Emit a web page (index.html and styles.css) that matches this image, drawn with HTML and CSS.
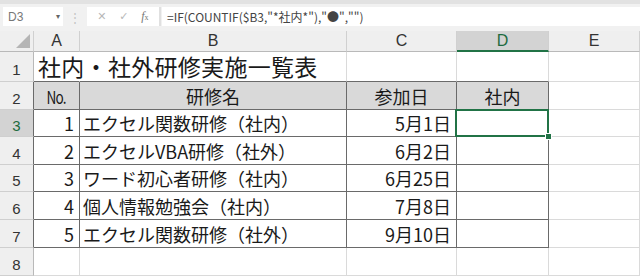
FILE: index.html
```html
<!DOCTYPE html>
<html lang="ja">
<head>
    <meta charset="UTF-8">
    <title>社内・社外研修実施一覧表</title>
    <link rel="stylesheet" href="styles.css">
</head>
<body>
    <div id="formulaBar">
        <div class="namebox">D3<span class="caret">&#9662;</span></div>
        <div class="grip">&#8942;</div>
        <div class="btns">
            <span class="btn">&#10005;</span>
            <span class="btn">&#10003;</span>
            <span class="btn fx"><i>f</i><small>x</small></span>
        </div>
        <div class="formula">=IF(COUNTIF($B3,"*社内*"),"●","")</div>
    </div>

    <div id="sheet">
        <!-- column headers -->
        <div class="hd corner"><span class="tri"></span></div>
        <div class="hd">A</div>
        <div class="hd">B</div>
        <div class="hd">C</div>
        <div class="hd on">D</div>
        <div class="hd">E</div>

        <!-- row 1 -->
        <div class="rh">1</div>
        <div class="c top title-cell"><span class="title">社内・社外研修実施一覧表</span></div>
        <div class="c top"></div>
        <div class="c top"></div>
        <div class="c top"></div>
        <div class="c"></div>

        <!-- row 2 -->
        <div class="rh edge">2</div>
        <div class="c t fill mid"><span class="no">No.</span></div>
        <div class="c t fill mid">研修名</div>
        <div class="c t fill mid">参加日</div>
        <div class="c t fill mid">社内</div>
        <div class="c"></div>

        <!-- row 3 -->
        <div class="rh edge on">3</div>
        <div class="c t num">1</div>
        <div class="c t">エクセル関数研修（社内）</div>
        <div class="c t num">5月1日</div>
        <div class="c t sel"></div>
        <div class="c"></div>

        <!-- row 4 -->
        <div class="rh edge">4</div>
        <div class="c t num">2</div>
        <div class="c t">エクセルVBA研修（社外）</div>
        <div class="c t num">6月2日</div>
        <div class="c t"></div>
        <div class="c"></div>

        <!-- row 5 -->
        <div class="rh edge">5</div>
        <div class="c t num">3</div>
        <div class="c t">ワード初心者研修（社内）</div>
        <div class="c t num">6月25日</div>
        <div class="c t"></div>
        <div class="c"></div>

        <!-- row 6 -->
        <div class="rh edge">6</div>
        <div class="c t num">4</div>
        <div class="c t">個人情報勉強会（社内）</div>
        <div class="c t num">7月8日</div>
        <div class="c t"></div>
        <div class="c"></div>

        <!-- row 7 -->
        <div class="rh edge">7</div>
        <div class="c t num">5</div>
        <div class="c t">エクセル関数研修（社外）</div>
        <div class="c t num">9月10日</div>
        <div class="c t"></div>
        <div class="c"></div>

        <!-- row 8 -->
        <div class="rh">8</div>
        <div class="c"></div>
        <div class="c"></div>
        <div class="c"></div>
        <div class="c"></div>
        <div class="c"></div>
    </div>
</body>
</html>
```

FILE: styles.css
```css
* {
    box-sizing: border-box;
}

body {
    margin: 0;
    width: 640px;
    height: 276px;
    overflow: hidden;
    background-color: #fff;
    font-family: "Noto Sans CJK JP", sans-serif;
    color: #1a1a1a;
}

/* Formula bar */
#formulaBar {
    height: 31px;
    display: flex;
    align-items: flex-start;
    background-color: #f1f1f1;
    border-top: 4px solid #e2e2e2;
    padding-top: 3px;
}

.namebox {
    width: 60px;
    height: 19px;
    margin-left: 3px;
    background-color: #fff;
    display: flex;
    align-items: center;
    justify-content: space-between;
    padding: 0 3px 0 5px;
    font-family: "Liberation Sans", sans-serif;
    font-size: 12px;
    color: #777;
}

.caret {
    font-size: 8px;
    color: #666;
}

.grip {
    width: 24px;
    text-align: center;
    font-size: 12px;
    line-height: 19px;
    color: #c4c4c4;
}

.btns {
    width: 74px;
    height: 19px;
    background-color: #fff;
    display: flex;
    align-items: center;
    justify-content: space-around;
    padding: 0 4px;
    border-right: 2px solid #e0e0e0;
}

.btn {
    font-size: 11px;
    color: #b8b8b8;
    font-family: "DejaVu Sans", sans-serif;
}

.btn.fx {
    font-family: "Liberation Serif", serif;
    color: #777;
    font-size: 12px;
}

.btn.fx small {
    font-size: 8px;
}

.formula {
    flex: 1;
    height: 19px;
    margin-left: 1px;
    background-color: #fff;
    padding-left: 5px;
    font-size: 12px;
    line-height: 19px;
    color: #444;
    white-space: nowrap;
}

/* Sheet grid */
#sheet {
    display: grid;
    grid-template-columns: 34px 46px 267px 110px 92px 91px;
    grid-template-rows: 21px 30px 28px 27px 28px 27px 28px 28px 28px;
}

.hd, .rh {
    background-color: #efefef;
    border-right: 1px solid #d0d0d0;
    border-bottom: 1px solid #cfcfcf;
    display: flex;
    align-items: center;
    justify-content: center;
    font-family: "Liberation Sans", sans-serif;
    color: #333;
}

.hd {
    font-size: 16px;
    border-bottom-color: #b9b9b9;
}

.rh {
    font-size: 15px;
    padding-top: 5px;
    border-right-color: #b9b9b9;
}

.rh.edge {
    border-right-color: #6a6a6a;
}

.hd.on {
    background-color: #d3d3d3;
    color: #1e6b40;
    border-bottom: 2px solid #217346;
}

.rh.on {
    background-color: #d3d3d3;
    color: #1e6b40;
}

.corner {
    position: relative;
}

.tri {
    position: absolute;
    right: 3px;
    bottom: 3px;
    width: 0;
    height: 0;
    border-left: 14px solid transparent;
    border-bottom: 14px solid #b5b5b5;
}

.c {
    border-right: 1px solid #dadada;
    border-bottom: 1px solid #dadada;
    font-size: 18px;
    line-height: 1;
    display: flex;
    align-items: flex-end;
    padding: 0 3px 4px 3px;
    white-space: nowrap;
}

.c.top {
    border-bottom-color: #6a6a6a;
}

.c.t {
    border-right-color: #6a6a6a;
    border-bottom-color: #6a6a6a;
}

.c.fill {
    background-color: #d9d9d9;
}

.c.mid {
    justify-content: center;
}

.c.num {
    justify-content: flex-end;
    padding-right: 5px;
}

.title-cell {
    border-right-color: transparent;
    overflow: visible;
    padding-left: 4px;
    padding-bottom: 3px;
}

.title {
    font-size: 23px;
    letter-spacing: 0.3px;
    position: relative;
    z-index: 1;
}

.no {
    font-size: 17px;
    letter-spacing: -1px;
    transform: scaleX(0.8);
}

/* selected cell */
.sel {
    position: relative;
}

.sel::after {
    content: "";
    position: absolute;
    left: -2px;
    top: -1px;
    right: -1px;
    bottom: -1px;
    border: 2px solid #217346;
}

.sel::before {
    content: "";
    position: absolute;
    right: -4px;
    bottom: -4px;
    width: 5px;
    height: 5px;
    background-color: #217346;
    border: 1px solid #fff;
    z-index: 2;
}
```
